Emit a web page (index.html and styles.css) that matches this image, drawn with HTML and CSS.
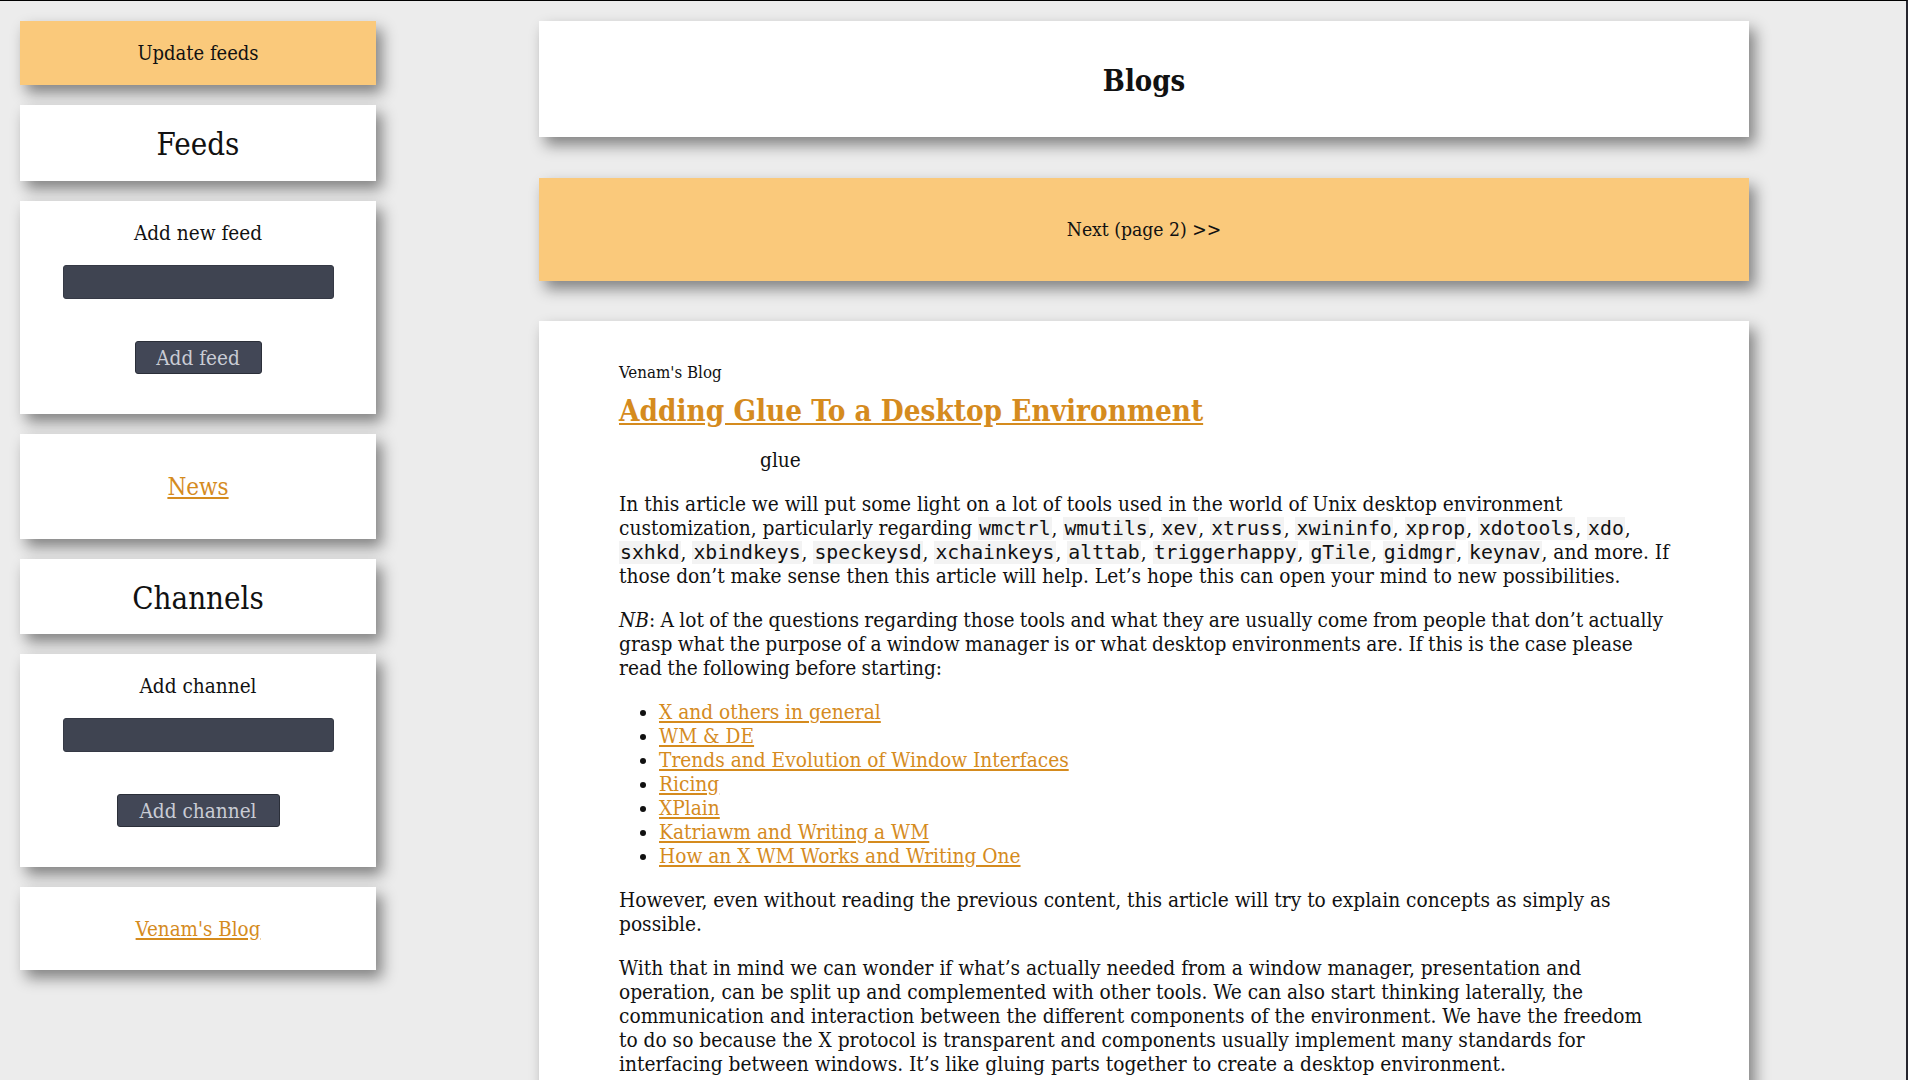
FILE: index.html
```html
<!DOCTYPE html>
<html lang="en">
<head>
<meta charset="utf-8">
<title>Blogs</title>
<link rel="stylesheet" href="styles.css">
</head>
<body>
<div class="page">
  <aside class="sidebar">
    <div class="card card-accent update">Update feeds</div>
    <div class="card section-title feeds">Feeds</div>
    <div class="card form-card">
      <div class="form-label">Add new feed</div>
      <div class="input-box"></div>
      <button class="dark-btn btn-feed">Add feed</button>
    </div>
    <div class="card news"><a href="#">News</a></div>
    <div class="card section-title channels">Channels</div>
    <div class="card form-card">
      <div class="form-label">Add channel</div>
      <div class="input-box"></div>
      <button class="dark-btn btn-channel">Add channel</button>
    </div>
    <div class="card channel-link"><a href="#">Venam's Blog</a></div>
  </aside>

  <main class="main">
    <div class="card blogs-head">Blogs</div>
    <div class="card card-accent next">Next (page 2) &gt;&gt;</div>
    <article class="card article">
      <div class="source">Venam's Blog</div>
      <h1 class="article-title"><a href="#">Adding Glue To a Desktop Environment</a></h1>
      <div class="img-alt">glue</div>
      <p>In this article we will put some light on a lot of tools used in the world of Unix desktop environment customization, particularly regarding <code>wmctrl</code>, <code>wmutils</code>, <code>xev</code>, <code>xtruss</code>, <code>xwininfo</code>, <code>xprop</code>, <code>xdotools</code>, <code>xdo</code>, <code>sxhkd</code>, <code>xbindkeys</code>, <code>speckeysd</code>, <code>xchainkeys</code>, <code>alttab</code>, <code>triggerhappy</code>, <code>gTile</code>, <code>gidmgr</code>, <code>keynav</code>, and more. If those don’t make sense then this article will help. Let’s hope this can open your mind to new possibilities.</p>
      <p class="tight"><em>NB</em>: A lot of the questions regarding those tools and what they are usually come from people that don’t actually grasp what the purpose of a window manager is or what desktop environments are. If this is the case please read the following before starting:</p>
      <ul>
        <li><a href="#">X and others in general</a></li>
        <li><a href="#">WM &amp; DE</a></li>
        <li><a href="#">Trends and Evolution of Window Interfaces</a></li>
        <li><a href="#">Ricing</a></li>
        <li><a href="#">XPlain</a></li>
        <li><a href="#">Katriawm and Writing a WM</a></li>
        <li><a href="#">How an X WM Works and Writing One</a></li>
      </ul>
      <p>However, even without reading the previous content, this article will try to explain concepts as simply as possible.</p>
      <p>With that in mind we can wonder if what’s actually needed from a window manager, presentation and operation, can be split up and complemented with other tools. We can also start thinking laterally, the communication and interaction between the different components of the environment. We have the freedom<br>to do so because the X protocol is transparent and components usually implement many standards for interfacing between windows. It’s like gluing parts together to create a desktop environment.</p>
    </article>
  </main>
</div>
</body>
</html>
```

FILE: styles.css
```css
html, body {
  margin: 0;
  padding: 0;
}
body {
  background: #ececec;
  color: #111;
  font-family: "DejaVu Serif", "Liberation Serif", serif;
  font-stretch: semi-condensed;
  font-size: 20px;
  line-height: 24px;
  border-top: 1px solid #000;
  border-right: 2px solid #26262e;
  min-height: 100vh;
  box-sizing: border-box;
  overflow: hidden;
}
a {
  color: #d58b1e;
}
.page {
  display: flex;
  align-items: flex-start;
  padding-top: 20px;
}
.sidebar {
  width: 356px;
  margin-left: 20px;
  display: flex;
  flex-direction: column;
  gap: 20px;
  text-align: center;
}
.card {
  background: #fff;
  box-shadow: 6px 8px 14px rgba(0, 0, 0, 0.45);
}
.card-accent {
  background: #fac97b;
}
.update {
  padding: 20px 0;
}
.section-title {
  font-size: 31px;
  line-height: 36px;
}
.feeds {
  padding: 21px 0 19px;
}
.channels {
  padding: 21px 0 18px;
}
.form-card {
  padding: 20px 0 40px;
  display: flex;
  flex-direction: column;
  align-items: center;
}
.form-label {
  font-size: 20.6px;
}
.input-box {
  margin-top: 20px;
  width: 271px;
  height: 34px;
  box-sizing: border-box;
  background: #3f4451;
  border: 1px solid #353945;
  border-radius: 3px;
}
.dark-btn {
  margin-top: 42px;
  height: 33px;
  box-sizing: border-box;
  background: #424756;
  border: 1px solid #2b2f39;
  border-radius: 3px;
  color: #c9ccd5;
  font-family: inherit;
  font-stretch: semi-condensed;
  font-size: 20.6px;
  line-height: 24px;
  padding: 0;
}
.btn-feed {
  width: 127px;
}
.btn-channel {
  width: 163px;
}
.news {
  padding: 41px 0 39px;
  font-size: 24px;
  line-height: 25px;
}
.channel-link {
  padding: 30px 0 29px;
  font-size: 20.4px;
}

.main {
  width: 1210px;
  margin-left: 163px;
  display: flex;
  flex-direction: column;
}
.blogs-head {
  padding: 42px 0 38px;
  text-align: center;
  font-weight: bold;
  font-size: 29px;
  line-height: 36px;
}
.next {
  margin-top: 41px;
  padding: 40px 0 39px;
  text-align: center;
  font-size: 19.2px;
}
.article {
  margin-top: 40px;
  padding: 40px 74px 60px 80px;
  font-size: 20.7px;
}
.source {
  margin-top: 2px;
  font-size: 16.8px;
  line-height: 18px;
}
.article-title {
  margin: 11px 0 0;
  font-size: 29.4px;
  line-height: 38px;
  font-weight: bold;
}
.img-alt {
  margin: 18px 0 0 141px;
}
.article p {
  margin: 20px 0 0;
}
.article p.tight {
  word-spacing: -0.6px;
}
.article code {
  font-family: "DejaVu Sans Mono", "Liberation Mono", monospace;
  font-size: 19.8px;
  line-height: 20px;
  background: #f3f3f3;
  padding: 0 1px;
}
.article ul {
  margin: 20px 0 0;
  padding-left: 40px;
}
```
